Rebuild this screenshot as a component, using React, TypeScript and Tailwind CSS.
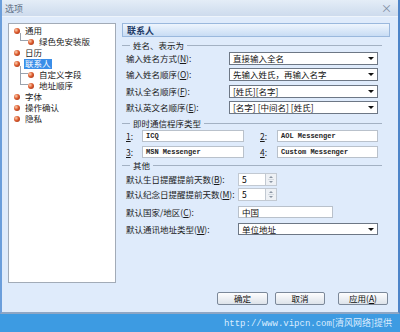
import { clsx } from "clsx"

type TreeItem = { label: string; level: 0 | 1; last?: boolean; selected?: boolean }

const treeItems: TreeItem[] = [
    { label: "通用", level: 0 },
    { label: "绿色免安装版", level: 1, last: true },
    { label: "日历", level: 0 },
    { label: "联系人", level: 0, selected: true },
    { label: "自定义字段", level: 1 },
    { label: "地址顺序", level: 1, last: true },
    { label: "字体", level: 0 },
    { label: "操作确认", level: 0 },
    { label: "隐私", level: 0 },
]

function Bullet() {
    return (
        <span className="w-[6px] h-[6px] shrink-0 rounded-full bg-[radial-gradient(circle_at_35%_35%,#fbd0b0_0%,#dd5b2e_45%,#8c2a10_100%)]" />
    )
}

function Accel({ text, k }: { text: string; k: string }) {
    return (
        <span className="whitespace-nowrap">
            {text}(<span className="underline">{k}</span>):
        </span>
    )
}

function Select({ value, className }: { value: string; className?: string }) {
    return (
        <div
            className={clsx(
                "flex items-center justify-between bg-white border border-[#6d7785] pl-[3px] pr-[3px]",
                className,
            )}
        >
            <span className="text-[8.5px] leading-none text-[#111] whitespace-nowrap">{value}</span>
            <span className="w-0 h-0 border-l-[3px] border-r-[3px] border-t-[3px] border-l-transparent border-r-transparent border-t-[#111]" />
        </div>
    )
}

function Section({ title, className }: { title: string; className?: string }) {
    return (
        <div className={clsx("flex items-center h-[12px]", className)}>
            <span className="w-[8px] h-px bg-[#a3b1c3]" />
            <span className="px-[3px] text-[8.5px] leading-none text-[#1a1a1a] whitespace-nowrap">{title}</span>
            <span className="flex-1 h-px bg-[#a3b1c3] mr-[8px]" />
        </div>
    )
}

function Spin({ value }: { value: string }) {
    return (
        <div className="flex h-[13px]">
            <div className="w-[27px] h-full bg-white border border-[#c2c9d2] border-r-0 pl-[3px] flex items-center text-[8.5px] leading-none">
                {value}
            </div>
            <div className="w-[12px] h-full bg-[#eef1f5] border border-[#c2c9d2] flex flex-col items-center justify-center gap-[1px]">
                <span className="w-0 h-0 border-l-[2px] border-r-[2px] border-b-[2px] border-l-transparent border-r-transparent border-b-[#8a95a3]" />
                <span className="w-[6px] h-px bg-[#d3d9e0]" />
                <span className="w-0 h-0 border-l-[2px] border-r-[2px] border-t-[2px] border-l-transparent border-r-transparent border-t-[#8a95a3]" />
            </div>
        </div>
    )
}

function Button({ label, className }: { label: React.ReactNode; className?: string }) {
    return (
        <div
            className={clsx(
                "h-[13px] flex items-center justify-center rounded-[2px] border border-[#7b8899] bg-linear-to-b from-[#fdfdfe] to-[#dde3ea] text-[8.5px] leading-none text-[#111]",
                className,
            )}
        >
            {label}
        </div>
    )
}

const labelCls = "pl-[4px] text-[8.5px] leading-none text-[#1a1a1a]"

export default function App() {
    return (
        <div className="w-[400px] h-[332px] flex flex-col overflow-hidden bg-[#dfebfb] font-['Noto_Sans_CJK_SC',sans-serif] select-none">
            <div className="h-[314px] flex flex-col border-l-2 border-r-2 border-b-2 border-l-[#6b9edb] border-r-[#4d84c8] border-b-[#8ea6c4]">
                <div className="h-[17px] shrink-0 flex items-center justify-between px-[3px] bg-linear-to-b from-[#e4edf7] to-[#cddbed] border-b border-[#eef4fb]">
                    <span className="text-[9px] leading-none text-[#5b6c83]">选项</span>
                    <span className="text-[11px] leading-none text-[#7b8aa0] mr-[3px]">×</span>
                </div>

                <div className="flex-1 flex flex-col pt-[6px] pl-[6px]">
                    <div className="flex items-start">
                        <div className="w-[108px] h-[260px] bg-white border border-[#a2abb7] pt-[1px]">
                            {treeItems.map((item) => (
                                <div
                                    key={item.label}
                                    className={clsx(
                                        "h-[11px] flex items-center",
                                        item.level === 0 ? "pl-[5px]" : "pl-[11px]",
                                    )}
                                >
                                    {item.level === 1 && (
                                        <div className="w-[8px] h-full flex flex-col">
                                            <div className="h-[8px] -mt-[3px] border-l border-b border-[#9aa3ae]" />
                                            <div
                                                className={clsx(
                                                    "flex-1",
                                                    !item.last && "border-l border-[#9aa3ae]",
                                                )}
                                            />
                                        </div>
                                    )}
                                    <Bullet />
                                    <span
                                        className={clsx(
                                            "ml-[4px] px-[1px] h-[10px] flex items-center text-[8.5px] leading-none whitespace-nowrap",
                                            item.selected
                                                ? "bg-[#3a8ee8] text-white"
                                                : "text-[#1a1a1a]",
                                        )}
                                    >
                                        {item.label}
                                    </span>
                                </div>
                            ))}
                        </div>

                        <div className="w-[268px] ml-[6px] flex flex-col">
                            <div className="h-[14px] flex items-center pl-[4px] border border-[#9ab8dd] bg-linear-to-b from-[#eef5fd] to-[#c8dcf4]">
                                <span className="text-[9px] leading-none font-bold text-[#1f3b66]">联系人</span>
                            </div>

                            <Section title="姓名、表示为" className="mt-[2px]" />
                            {[
                                { text: "输入姓名方式", k: "N", value: "直接输入全名", mt: "mt-[1px]" },
                                { text: "输入姓名顺序", k: "O", value: "先输入姓氏，再输入名字", mt: "mt-[3px]" },
                                { text: "默认全名顺序", k: "F", value: "[姓氏][名字]", mt: "mt-[4px]" },
                                { text: "默认英文名顺序", k: "E", value: "[名字] [中间名] [姓氏]", mt: "mt-[3px]" },
                            ].map((row) => (
                                <div key={row.k} className={clsx("flex items-center h-[13px]", row.mt)}>
                                    <div className={clsx("w-[107px]", labelCls)}>
                                        <Accel text={row.text} k={row.k} />
                                    </div>
                                    <Select value={row.value} className="w-[149px] h-[13px]" />
                                </div>
                            ))}

                            <Section title="即时通信程序类型" className="mt-[3px]" />
                            {[
                                ["1", "ICQ", "2", "AOL Messenger", "mt-[1px]"],
                                ["3", "MSN Messenger", "4", "Custom Messenger", "mt-[4px]"],
                            ].map(([a, av, b, bv, mt]) => (
                                <div key={a} className={clsx("flex items-center h-[12px]", mt)}>
                                    <div className={clsx("w-[20px]", labelCls)}>
                                        <span className="underline">{a}</span>:
                                    </div>
                                    <div className="w-[102px] h-[12px] bg-white border border-[#b9c1cb] pl-[3px] flex items-center font-['Liberation_Mono',monospace] font-bold text-[7px] leading-none text-[#222]">
                                        {av}
                                    </div>
                                    <div className="w-[33px] pl-[16px] text-[8.5px] leading-none text-[#1a1a1a]">
                                        <span className="underline">{b}</span>:
                                    </div>
                                    <div className="w-[101px] h-[12px] bg-white border border-[#b9c1cb] pl-[3px] flex items-center font-['Liberation_Mono',monospace] font-bold text-[7px] leading-none text-[#222]">
                                        {bv}
                                    </div>
                                </div>
                            ))}

                            <Section title="其他" className="mt-[1px]" />
                            <div className="flex items-center h-[13px] mt-[2px]">
                                <div className={clsx("w-[116px]", labelCls)}>
                                    <Accel text="默认生日提醒提前天数" k="B" />
                                </div>
                                <Spin value="5" />
                            </div>
                            <div className="flex items-center h-[13px] mt-[2px]">
                                <div className={clsx("w-[116px]", labelCls)}>
                                    <Accel text="默认纪念日提醒提前天数" k="M" />
                                </div>
                                <Spin value="5" />
                            </div>
                            <div className="flex items-center h-[12px] mt-[5px]">
                                <div className={clsx("w-[116px]", labelCls)}>
                                    <Accel text="默认国家/地区" k="C" />
                                </div>
                                <div className="w-[95px] h-[12px] bg-white border border-[#b9c1cb] pl-[3px] flex items-center text-[8.5px] leading-none text-[#111]">
                                    中国
                                </div>
                            </div>
                            <div className="flex items-center h-[12px] mt-[5px]">
                                <div className={clsx("w-[116px]", labelCls)}>
                                    <Accel text="默认通讯地址类型" k="W" />
                                </div>
                                <Select value="单位地址" className="w-[140px] h-[12px]" />
                            </div>
                        </div>
                    </div>

                    <div className="flex justify-end pr-[10px] mt-[9px]">
                        <Button label="确定" className="w-[51px]" />
                        <Button label="取消" className="w-[50px] ml-[7px]" />
                        <Button
                            label={
                                <span>
                                    应用(<span className="underline">A</span>)
                                </span>
                            }
                            className="w-[50px] ml-[13px]"
                        />
                    </div>
                </div>
            </div>

            <div className="flex-1 bg-[#3d9be2] flex items-center justify-end pr-[8px]">
                <span className="text-[9px] leading-none text-[#dcedff]">
                    <span className="font-['Liberation_Mono',monospace]">http://www.vipcn.com</span>[清风网络]提供
                </span>
            </div>
        </div>
    )
}
